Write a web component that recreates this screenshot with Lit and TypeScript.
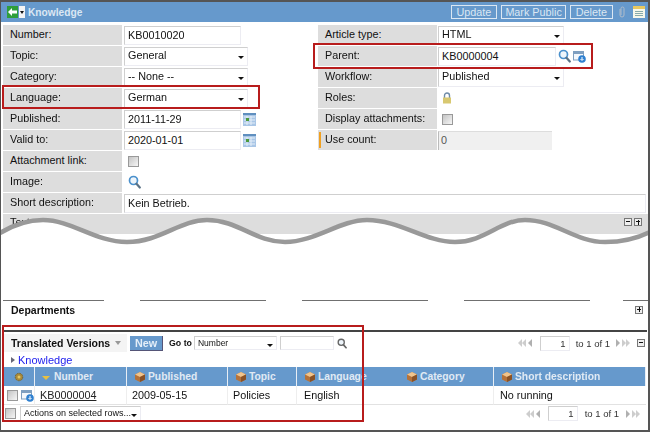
import { LitElement, css, html, svg } from 'lit';
import { customElement } from 'lit/decorators.js';

const cube = html`<svg class="cube" width="12" height="12" viewBox="0 0 12 12"><path d="M6 1l5 2.500v5L6 11 1 8.500v-5z" fill="#b5723a"/><path d="M6 1l5 2.500L6 6 1 3.500z" fill="#f0c48c"/><path d="M6 6v5l5-2.500v-5z" fill="#8a5226"/></svg>`;
const search = (c = '#4a90cc', h = '#5a7286', w = 13) => html`<svg width="${w}" height="${w + 1}" viewBox="0 0 13 14"><circle cx="5.500" cy="5.500" r="4" fill="#eef5fb" stroke="${c}" stroke-width="1.700"/><path d="M8.500 8.800l3.300 3.700" stroke="${h}" stroke-width="2.200" stroke-linecap="round"/></svg>`;
const refIcon = html`<svg width="13" height="13" viewBox="0 0 13 13"><rect x=".5" y="1.500" width="10" height="8.500" fill="#f4f8fc" stroke="#7f9fc0"/><rect x=".5" y="1.500" width="10" height="2.500" fill="#7f9fc0"/><circle cx="9" cy="9" r="3.800" fill="#2f80d0"/><path d="M9 7v3M7.500 9L9 10.500 10.500 9" stroke="#fff" fill="none"/></svg>`;
const calendar = html`<svg width="13" height="13" viewBox="0 0 13 13"><rect width="13" height="13" fill="#a9c6e6"/><rect width="13" height="2" fill="#5f8fbf"/><path d="M1 4h11M1 7h11M1 10h11M4 3v9M8 3v9" stroke="#e4eef8"/><rect x="3" y="5" width="3" height="3" fill="#4c9a3c"/></svg>`;
const arrowDown = html`<i class="drop"></i>`;
const gear = html`<svg width="10" height="10" viewBox="0 0 12 12"><circle cx="6" cy="6" r="4.500" fill="#a98a3a" stroke="#6a5a2a" stroke-dasharray="2 1"/><circle cx="6" cy="6" r="1.800" fill="#e8c860"/></svg>`;
const checkbox = html`<i class="check"></i>`;
const pageArrows = (dir: 'l' | 'r') => html`<svg width="16" height="10" viewBox="0 0 16 10">${dir === 'l'
  ? svg`<path d="M5 1v8L1 5zM9 1v8L5 5z" fill="#cdcdcd"/><path d="M15 1v8l-4-4z" fill="#b0b0b0"/>`
  : svg`<path d="M1 1v8l4-4z" fill="#b0b0b0"/><path d="M7 1v8l4-4zM11 1v8l4-4z" fill="#cdcdcd"/>`}</svg>`;

const columns = [
  { name: 'Number', sort: true },
  { name: 'Published' },
  { name: 'Topic' },
  { name: 'Language' },
  { name: 'Category' },
  { name: 'Short description' },
];

@customElement('app-root')
class AppRoot extends LitElement {
  static styles = css`
    :host {
      display: block;
      width: 650px;
      height: 432px;
      font-family: "Liberation Sans", Arial, sans-serif;
      font-size: 10.8px;
      color: #111;
      background: #fff;
    }
    * { box-sizing: border-box; }
    .frame {
      position: relative;
      width: 650px;
      height: 432px;
      border: 2px solid #555;
      border-width: 2px 2px 2px 1px;
      overflow: hidden;
      filter: blur(0.3px);
    }
    .titlebar {
      height: 20px;
      background: #6699cc;
      display: flex;
      align-items: center;
      padding: 0 3px 0 6px;
      color: #dbe7f3;
    }
    .back {
      width: 11px;
      height: 12px;
      background: #2f9e3a;
      margin-right: 1px;
      display: flex;
    }
    .menu {
      width: 6px;
      height: 12px;
      background: #f4f4f4;
      margin-right: 3px;
      display: flex;
      align-items: center;
      justify-content: center;
    }
    .menu i {
      border: 2px solid transparent;
      border-top: 3px solid #111;
      border-bottom: 0;
    }
    .title { font-weight: bold; font-size: 10.2px; flex: 1; }
    .tbtn {
      height: 14px;
      border: 1px solid #dbe7f3;
      padding: 0 5px;
      line-height: 12px;
      margin-left: 4px;
      white-space: nowrap;
    }
    .tbtn.tight { padding: 0 3px; }
    .clip { margin: 0 8px 0 6px; display: flex; }
    .form {
      display: grid;
      grid-template-columns: 315px 1fr;
      padding: 3px 0 0 2px;
    }
    .row {
      display: flex;
      align-items: center;
      height: 21px;
      padding-bottom: 1px;
    }
    .lab {
      width: 119px;
      height: 20px;
      flex: none;
      background: #dddddd;
      padding-left: 7px;
      line-height: 19px;
      margin-right: 2px;
      position: relative;
      white-space: nowrap;
    }
    .right .lab { margin-right: 1px; }
    .mark::before {
      content: "";
      position: absolute;
      left: 1px;
      top: 2px;
      width: 2px;
      height: 16px;
      background: #f0a020;
    }
    .inp {
      height: 19px;
      border: 1px solid #cfcfcf;
      border-right-color: #ececf2;
      border-bottom-color: #ececf2;
      padding-left: 3px;
      line-height: 16px;
      background: #fff;
      white-space: nowrap;
    }
    .sel {
      position: relative;
      height: 19px;
      border: 1px solid #cfcfcf;
      border-right-color: #ececf2;
      border-bottom-color: #ececf2;
      padding-left: 3px;
      line-height: 15px;
    }
    .drop {
      position: absolute;
      right: 3px;
      top: 8px;
      border: 3.500px solid transparent;
      border-top: 3.500px solid #111;
      border-bottom: 0;
    }
    .w117 { width: 117px; }
    .w124 { width: 124px; }
    .w126 { width: 126px; }
    .w118 { width: 118px; }
    .fullw { width: 522px; }
    .gap { margin-left: 2px; display: flex; }
    .check {
      display: inline-block;
      width: 11px;
      height: 11px;
      flex: none;
      border: 1px solid #999;
      background: linear-gradient(135deg, #c4c4c4, #f6f6f6);
    }
    .ro {
      width: 114px;
      height: 19px;
      background: #f0f0f0;
      border-left: 1px solid #bbb;
      border-top: 1px solid #ddd;
      padding-left: 2px;
      line-height: 16px;
      color: #555;
    }
    .cell { padding-left: 4px; display: flex; align-items: center; }
    .full { padding-left: 2px; }
    .textrow {
      height: 20px;
      background: #ddd;
      display: flex;
      align-items: center;
      justify-content: flex-end;
      padding: 0 6px 4px 7px;
    }
    .textrow span:first-child { margin-right: auto; line-height: 24px; }
    .box {
      width: 8px;
      height: 8px;
      border: 1px solid #777;
      background: #eee;
      margin-left: 2px;
      position: relative;
      flex: none;
    }
    .box::before {
      content: "";
      position: absolute;
      left: 1px;
      top: 2px;
      width: 4px;
      height: 1px;
      background: #111;
    }
    .plus::after {
      content: "";
      position: absolute;
      left: 2.500px;
      top: 0.500px;
      width: 1px;
      height: 5px;
      background: #111;
    }
    .torn {
      height: 67px;
      position: relative;
      display: flex;
      flex-direction: column;
      justify-content: flex-end;
    }
    .bits {
      width: 27px;
      height: 2px;
      margin: 0 0 18px 30px;
      background: repeating-linear-gradient(90deg, #444 0 2px, transparent 2px 4px);
    }
    .dashes {
      height: 1px;
      background: repeating-linear-gradient(90deg, #707070 0 126px, transparent 126px 162px);
      background-position: -25px 0;
      margin-left: 2px;
    }
    .wave { position: absolute; left: -1px; top: 211px; }
    .dept {
      display: flex;
      align-items: center;
      justify-content: space-between;
      padding: 0 5px 12px 8px;
      font-size: 10.5px;
      font-weight: bold;
      border-bottom: 2px solid #444;
      margin: 0 1px 0 2px;
      height: 31px;
    }
    .dept .box { margin-right: -1px; }
    .toolbar {
      display: flex;
      align-items: center;
      height: 20px;
      margin: 1px 0 0 2px;
      padding-right: 3px;
    }
    .tname {
      background: #f4f4f4;
      width: 124px;
      height: 18px;
      flex: none;
      display: flex;
      align-items: center;
      padding-left: 8px;
      font-size: 10.5px;
      font-weight: bold;
      gap: 5px;
      white-space: nowrap;
    }
    .tname i {
      border: 3.500px solid transparent;
      border-top: 4px solid #999;
      border-bottom: 0;
    }
    .new {
      width: 33px;
      height: 15px;
      flex: none;
      margin-left: 3px;
      background: #6699cc;
      border-right: 1px solid #557;
      border-bottom: 1px solid #557;
      color: #e4eef8;
      font-weight: bold;
      text-align: center;
      line-height: 14px;
    }
    .goto { font-size: 8.8px; font-weight: bold; margin: 0 2px 0 6px; white-space: nowrap; }
    .tool-sel {
      width: 83px;
      height: 14px;
      flex: none;
      border: 1px solid #cfcfcf;
      border-right-color: #ececf2;
      border-bottom-color: #ececf2;
      font-size: 8.5px;
      line-height: 12px;
      padding-left: 3px;
      position: relative;
      white-space: nowrap;
    }
    .tool-sel .drop { top: 7px; }
    .tool-inp {
      width: 54px;
      height: 14px;
      flex: none;
      margin: 0 3px 0 3px;
      border: 1px solid #cfcfcf;
      border-right-color: #ececf2;
      border-bottom-color: #ececf2;
    }
    .pager {
      margin-left: auto;
      display: flex;
      align-items: center;
      font-size: 9.500px;
      color: #333;
      white-space: nowrap;
    }
    .pinp {
      width: 30px;
      height: 15px;
      border: 1px solid #cfcfcf;
      border-right-color: #ececf2;
      border-bottom-color: #ececf2;
      margin: 0 6px 0 7px;
      text-align: right;
      padding-right: 3px;
      line-height: 13px;
    }
    .pager svg:last-of-type { margin-left: 5px; }
    .crumb {
      height: 14px;
      display: flex;
      align-items: center;
      padding-left: 10px;
      color: #2222ee;
      font-size: 11px;
      gap: 3px;
    }
    .crumb i {
      border: 3.500px solid transparent;
      border-left: 4px solid #667;
      border-right: 0;
    }
    .grid {
      display: grid;
      grid-template-columns: 32px 92px 101px 69px 102px 95px 1fr;
      margin: 0 2px 0 2px;
    }
    .th {
      height: 19px;
      background: #6699cc;
      color: #e0eaf4;
      font-size: 10.3px;
      font-weight: bold;
      display: flex;
      align-items: center;
      gap: 2px;
      padding-left: 7px;
      border-right: 1px solid #e8eef5;
      white-space: nowrap;
    }
    .th.icon { justify-content: center; padding-left: 0; }
    .th.open { border-right: 0; }
    .th:last-child { border-right: 0; }
    .th .sort {
      border: 4px solid transparent;
      border-top: 4px solid #e8c040;
      border-bottom: 0;
      margin: 3px 2px 0 0;
    }
    .td {
      height: 19px;
      border-bottom: 1px solid #e2e2e2;
      border-right: 1px solid #eee;
      padding-left: 5px;
      line-height: 18px;
      white-space: nowrap;
      display: flex;
      align-items: center;
      gap: 3px;
    }
    .td.open { border-right: 0; padding-left: 7px; }
    .td:last-child { border-right: 0; padding-left: 6px; }
    .td.first { padding-left: 4px; }
    .td a { color: #222; text-decoration: underline; }
    .foot {
      display: flex;
      align-items: center;
      height: 17px;
      padding: 0 7px 0 4px;
    }
    .foot .check { margin-right: 4px; }
    .foot .tool-sel { width: 121px; height: 15px; font-size: 9px; }
    .foot .pager .pinp { margin-left: 7px; margin-right: 7px; }
    .foot .pager svg:last-of-type { margin-left: 6px; }
    .redbox {
      position: absolute;
      border: 2px solid #b81c1c;
      pointer-events: none;
    }
    .r1 { left: 1px; top: 83px; width: 258px; height: 24px; }
    .r2 { left: 312px; top: 41px; width: 280px; height: 26px; }
    .r3 { left: 1px; top: 323px; width: 362px; height: 97px; }
  `;

  render() {
    return html`
      <div class="frame">
        <div class="titlebar">
          <span class="back"><svg width="11" height="12" viewBox="0 0 11 12"><path d="M1 6l4-4v2.500h5v3H5V10z" fill="#fff"/></svg></span>
          <span class="menu"><i></i></span>
          <span class="title">Knowledge</span>
          <span class="tbtn">Update</span>
          <span class="tbtn tight">Mark Public</span>
          <span class="tbtn">Delete</span>
          <span class="clip"><svg width="6" height="12" viewBox="0 0 6 12"><path d="M1 3v6a2 2 0 0 0 4 0V2.500a1.500 1.500 0 0 0-3 0V9" fill="none" stroke="#aebccb"/></svg></span>
          <svg width="12" height="12" viewBox="0 0 12 12"><rect width="12" height="12" fill="#f7f7ea"/><rect width="12" height="3" fill="#e8c860"/><path d="M2 5.500h8M2 7.500h8M2 9.500h8" stroke="#8aa"/></svg>
        </div>

        <div class="form">
          <div>
            <div class="row"><div class="lab">Number:</div><div class="inp w117">KB0010020</div></div>
            <div class="row"><div class="lab">Topic:</div><div class="sel w124">General${arrowDown}</div></div>
            <div class="row"><div class="lab">Category:</div><div class="sel w124">-- None --${arrowDown}</div></div>
            <div class="row"><div class="lab">Language:</div><div class="sel w124">German${arrowDown}</div></div>
            <div class="row"><div class="lab">Published:</div><div class="inp w117">2011-11-29</div><span class="gap">${calendar}</span></div>
            <div class="row"><div class="lab">Valid to:</div><div class="inp w117">2020-01-01</div><span class="gap">${calendar}</span></div>
          </div>
          <div class="right">
            <div class="row"><div class="lab">Article type:</div><div class="sel w126">HTML${arrowDown}</div></div>
            <div class="row"><div class="lab">Parent:</div><div class="inp w118">KB0000004</div><span class="gap">${search()}</span><span class="gap">${refIcon}</span></div>
            <div class="row"><div class="lab">Workflow:</div><div class="sel w126">Published${arrowDown}</div></div>
            <div class="row"><div class="lab">Roles:</div><div class="cell"><svg width="10" height="12" viewBox="0 0 10 12"><path d="M2.500 6V3.500a2.500 2.500 0 0 1 5 0V6" fill="none" stroke="#6f8ba8" stroke-width="1.400"/><rect x="1" y="5.500" width="8" height="6" fill="#d8c870"/></svg></div></div>
            <div class="row"><div class="lab">Display attachments:</div><div class="cell">${checkbox}</div></div>
            <div class="row"><div class="lab mark">Use count:</div><div class="ro">0</div></div>
          </div>
        </div>

        <div class="full">
          <div class="row"><div class="lab">Attachment link:</div><div class="cell">${checkbox}</div></div>
          <div class="row"><div class="lab">Image:</div><div class="cell">${search()}</div></div>
          <div class="row"><div class="lab">Short description:</div><div class="inp fullw">Kein Betrieb.</div></div>
          <div class="textrow"><span>Text:</span><span class="box"></span><span class="box plus"></span></div>
        </div>

        <div class="torn">
          <div class="bits"></div>
          <div class="dashes"></div>
        </div>

        <div class="dept"><span>Departments</span><span class="box plus"></span></div>

        <div class="toolbar">
          <div class="tname">Translated Versions <i></i></div>
          <div class="new">New</div>
          <span class="goto">Go to</span>
          <div class="tool-sel">Number${arrowDown}</div>
          <div class="tool-inp"></div>
          ${search('#666', '#666', 10)}
          <div class="pager">
            ${pageArrows('l')}
            <div class="pinp">1</div>
            <span>to 1 of 1</span>
            ${pageArrows('r')}
            <span class="box" style="margin-left:6px"></span>
          </div>
        </div>
        <div class="crumb"><i></i>Knowledge</div>
        <div class="grid">
          <div class="th icon">${gear}</div>
          ${columns.map(c => html`<div class="th ${c.name === 'Language' ? 'open' : ''}">${c.sort ? html`<i class="sort"></i>` : cube}${c.name}</div>`)}
          <div class="td first">${checkbox}${refIcon}</div>
          <div class="td"><a>KB0000004</a></div>
          <div class="td">2009-05-15</div>
          <div class="td">Policies</div>
          <div class="td open">English</div>
          <div class="td"></div>
          <div class="td">No running</div>
        </div>
        <div class="foot">
          ${checkbox}
          <div class="tool-sel">Actions on selected rows...${arrowDown}</div>
          <div class="pager">
            ${pageArrows('l')}
            <div class="pinp">1</div>
            <span>to 1 of 1</span>
            ${pageArrows('r')}
          </div>
        </div>

        <svg class="wave" width="650" height="88" viewBox="0 0 650 88">
          <path d="M0 20C15 11 30 7 43 7C72 7 95 29 127 29C160 29 180 7 207 7C238 7 255 29 285 29C315 29 340 7 367 7C400 7 425 29 455 29C485 29 500 7 525 7C555 7 575 29 605 29C625 29 640 24 650 19V69H0Z" fill="#fff"/>
          <path d="M0 20C15 11 30 7 43 7C72 7 95 29 127 29C160 29 180 7 207 7C238 7 255 29 285 29C315 29 340 7 367 7C400 7 425 29 455 29C485 29 500 7 525 7C555 7 575 29 605 29C625 29 640 24 650 19" fill="none" stroke="#999" stroke-width="4.500"/>
        </svg>

        <div class="redbox r1"></div>
        <div class="redbox r2"></div>
        <div class="redbox r3"></div>
      </div>
    `;
  }
}

export default AppRoot;
